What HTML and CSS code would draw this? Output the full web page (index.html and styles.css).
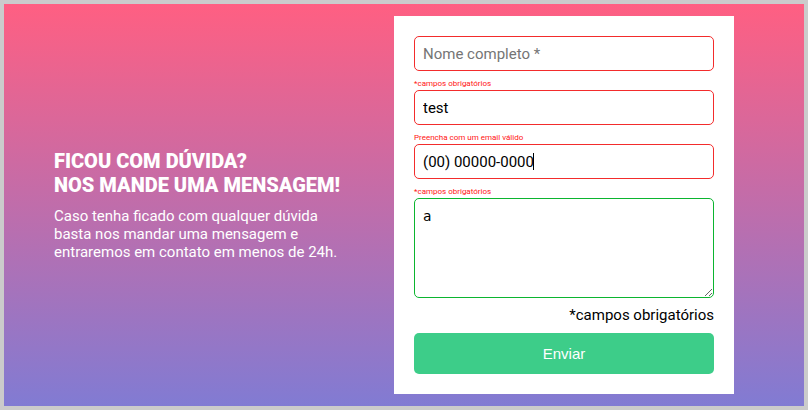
FILE: index.html
```html
<!DOCTYPE html>
<html lang="pt-BR">
<head>
<meta charset="utf-8">
<meta name="viewport" content="width=device-width, initial-scale=1">
<title>Contato</title>
<link rel="stylesheet" href="styles.css">
</head>
<body>
<main class="contact">
  <section class="intro">
    <h1 class="intro-title">FICOU COM DÚVIDA?<br>NOS MANDE UMA MENSAGEM!</h1>
    <p class="intro-text">Caso tenha ficado com qualquer dúvida basta nos mandar uma mensagem e entraremos em contato em menos de 24h.</p>
  </section>
  <form class="form" novalidate>
    <div class="field">
      <input class="control invalid" type="text" aria-label="Nome completo" aria-describedby="name-error" placeholder="Nome completo *">
      <p class="error" id="name-error">*campos obrigatórios</p>
    </div>
    <div class="field">
      <input class="control invalid" type="email" aria-label="E-mail" aria-describedby="email-error" value="test">
      <p class="error" id="email-error">Preencha com um email válido</p>
    </div>
    <div class="field">
      <input class="control invalid" type="tel" aria-label="Telefone" aria-describedby="phone-error" value="(00) 00000-0000">
      <span class="caret"></span>
      <p class="error" id="phone-error">*campos obrigatórios</p>
    </div>
    <textarea class="control message valid" aria-label="Mensagem">a</textarea>
    <p class="note">*campos obrigatórios</p>
    <button class="submit" type="submit">Enviar</button>
  </form>
</main>
</body>
</html>
```

FILE: styles.css
```css
* {
  box-sizing: border-box;
  margin: 0;
  padding: 0;
}

body {
  font-family: Roboto, "Liberation Sans", sans-serif;
  font-size: 15px;
}

.contact {
  display: flex;
  align-items: center;
  justify-content: space-between;
  gap: 50px;
  min-height: 100vh;
  padding: 12px 70px 12px 50px;
  border: 4px solid #cbcbcb;
  background: linear-gradient(#ff5f82, #817bd3);
}

.intro {
  flex: 1;
  color: #fff;
}

.intro-title {
  margin-bottom: 10px;
  font-size: 20px;
  font-weight: 900;
  line-height: 24px;
  white-space: nowrap;
}

.intro-text {
  line-height: 18px;
}

.form {
  flex: 0 1 340px;
  padding: 20px;
  background: #fff;
}

.field {
  position: relative;
}

.control {
  display: block;
  width: 100%;
  height: 35px;
  padding: 8px;
  border: 1px solid;
  border-radius: 5px;
  outline: none;
  background: #fff;
  color: #000;
  font-family: inherit;
  font-size: 15px;
}

.control::placeholder {
  color: #757575;
}

.invalid {
  border-color: #f32c2c;
}

.valid {
  border-color: #0bb52f;
}

.message {
  height: 100px;
  font-family: "DejaVu Sans Mono", monospace;
  font-size: 14px;
  line-height: 18px;
  resize: vertical;
}

.caret {
  position: absolute;
  top: 9px;
  left: 119px;
  width: 1px;
  height: 17px;
  background: #000;
}

.error {
  padding-top: 7px;
  color: #ff1414;
  font-size: 8px;
  line-height: 12px;
}

.note {
  padding: 8px 0 9px;
  line-height: 18px;
  text-align: right;
}

.submit {
  display: block;
  width: 100%;
  height: 41px;
  border: 0;
  border-radius: 5px;
  background: #3dcd89;
  color: #fff;
  font-family: "Liberation Sans", sans-serif;
  font-size: 15px;
}
```
